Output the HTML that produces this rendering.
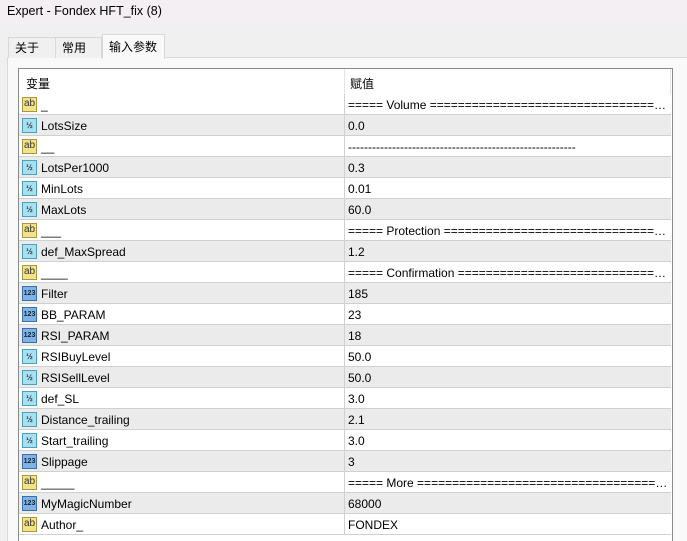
<!DOCTYPE html><html><head><style>
html,body{margin:0;width:687px;height:541px;overflow:hidden}
body{background:#f0f0f0;font-family:"Liberation Sans","Noto Sans CJK SC",sans-serif;font-size:12px;color:#000;position:relative}
.title{position:absolute;left:0;top:0;width:687px;height:25px;background:#f3eff3;}
.title span{position:absolute;left:7px;top:4px;font-size:12.5px}
.tab{position:absolute;top:37px;height:21px;border:1px solid #d9d9d9;border-bottom:none;background:#f0f0f0;font-size:12px;line-height:20px;padding-left:6px;box-sizing:border-box}
.panel{position:absolute;left:7px;top:57px;width:690px;height:490px;background:#f9f9f9;border:1px solid #d9d9d9}
.box{position:absolute;left:18px;top:68px;width:655px;height:480px;border:1px solid #8a8a8a;background:#fff;box-sizing:border-box}
.hdr{position:absolute;left:0;top:0;height:25px;width:653px}
.hdr div{position:absolute;top:6px}
.row{position:absolute;left:0;width:652px;height:21px;border-bottom:1px solid #d0d0d0;box-sizing:border-box}
.row.g{background:#ebebeb}
.row .n{position:absolute;left:22px;top:4px}
.row .v{position:absolute;left:329px;top:4px;white-space:nowrap;width:320px;overflow:hidden;text-overflow:ellipsis}
.row .sep{position:absolute;left:325px;top:0;width:1px;height:21px;background:#d0d0d0}
.ic{position:absolute;left:3px;top:3px;width:15px;height:15px;box-sizing:border-box;font-size:8px;line-height:14px;text-align:center;font-weight:bold}
.ab{background:#f2e38a;border:1px solid #a89840;color:#333;font-size:10px;font-weight:normal;line-height:12px}
.hf{background:#a8e0ee;border:1px solid #4aa0c0;color:#235;font-size:8px}
.nm{background:#7fb3e6;border:1px solid #3c6ea8;color:#123;font-size:7px}
</style></head><body>
<div class="title"><span>Expert - Fondex HFT_fix (8)</span></div>
<div class="panel"></div>
<div class="tab" style="left:8px;width:48px">关于</div>
<div class="tab" style="left:55px;width:47px">常用</div>
<div class="tab" style="left:102px;top:34px;height:25px;width:63px;background:#f9f9f9;line-height:24px;z-index:2">输入参数</div>
<div class="box">
<div class="hdr"><div style="left:7px">变量</div><div style="left:331px">赋值</div><span style="position:absolute;left:325px;top:0;width:1px;height:25px;background:#e4e4e4"></span><span style="position:absolute;left:651px;top:0;width:1px;height:25px;background:#e4e4e4"></span></div>
<div id="rows"></div>
</div>
<script>
var E="=====================================================";
var d=[["ab","_","===== Volume "+E],["hf","LotsSize","0.0"],["ab","__","---------------------------------------------------------"],["hf","LotsPer1000","0.3"],["hf","MinLots","0.01"],["hf","MaxLots","60.0"],["ab","___","===== Protection "+E],["hf","def_MaxSpread","1.2"],["ab","____","===== Confirmation "+E],["nm","Filter","185"],["nm","BB_PARAM","23"],["nm","RSI_PARAM","18"],["hf","RSIBuyLevel","50.0"],["hf","RSISellLevel","50.0"],["hf","def_SL","3.0"],["hf","Distance_trailing","2.1"],["hf","Start_trailing","3.0"],["nm","Slippage","3"],["ab","_____","===== More "+E],["nm","MyMagicNumber","68000"],["ab","Author_","FONDEX"]];
var h="";d.forEach(function(r,i){var t=r[0]=="ab"?"ab":r[0]=="hf"?"½":"123";h+='<div class="row'+(i%2?' g':'')+'" style="top:'+(25+i*21)+'px"><div class="ic '+r[0]+'">'+t+'</div><div class="n">'+r[1]+'</div><div class="sep"></div><div class="v">'+r[2]+'</div></div>';});
document.getElementById("rows").innerHTML=h;
</script>
</body></html>
